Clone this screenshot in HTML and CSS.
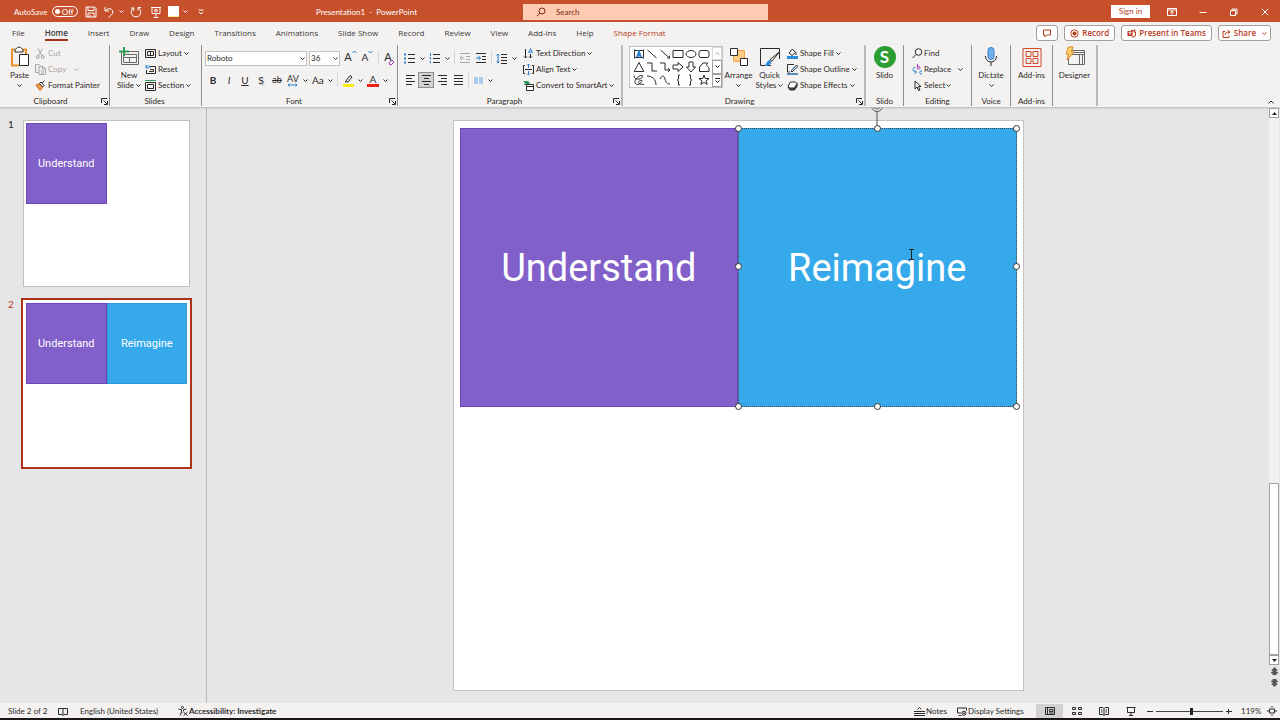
FILE: index.html
```html
<!DOCTYPE html>
<html lang="en">
<head>
<meta charset="utf-8">
<title>Presentation1 - PowerPoint</title>
<link rel="stylesheet" href="styles.css">
</head>
<body>
<svg class="sprite" aria-hidden="true">
  <symbol id="chev" viewBox="0 0 5 3"><path d="M.5.5l2 2 2-2"/></symbol>
  <symbol id="launch" viewBox="0 0 7 7"><path d="M.5 5V.5H6M2.500 2.500l3.500 3.500M6.500 3v3.500H3"/></symbol>
</svg>

<header class="titlebar">
  <div class="quick">
    <label class="autosave">AutoSave <span class="switch"><input type="checkbox" role="switch"><span>Off</span></span></label>
    <button class="qa" aria-label="Save"><svg width="12" height="12" viewBox="0 0 12 12"><path d="M1 1h8.500L11 2.500V11H1zM3 1v3.500h6V1M3 11V7h6v4M5 8.500v2.500"/></svg></button>
    <button class="qa undo" aria-label="Undo"><svg width="12" height="12" viewBox="0 0 12 12"><path d="M2 1v4h4M2.300 4.700C5 1.500 10 2.500 9.800 6c0 2.500-2.500 3.500-4.300 5.500"/></svg></button>
    <button class="drop" aria-label="Undo list"><svg class="chev"><use href="#chev"/></svg></button>
    <button class="qa redo" aria-label="Redo"><svg width="12" height="12" viewBox="0 0 12 12"><path d="M8 4.500v-3h3M8.500 2A4.800 4.800 0 1 1 3.500 2M.8 2h3v3"/></svg></button>
    <button class="qa" aria-label="Start from beginning"><svg width="12" height="12" viewBox="0 0 12 12"><path d="M1 1.500h10M2 1.500v6h8v-6M6 7.500v4M3.500 11.500h5M5 3l3 1.500L5 6z"/></svg></button>
    <button class="qa swatch" aria-label="Shape fill"><span></span></button>
    <button class="drop" aria-label="Fill options"><svg class="chev"><use href="#chev"/></svg></button>
    <button class="drop more" aria-label="Customize toolbar"><svg width="6" height="6" viewBox="0 0 6 6"><path d="M.5 1h5M1 3l2 2 2-2"/></svg></button>
  </div>
  <h1 class="doc">Presentation1&nbsp; -&nbsp; PowerPoint</h1>
  <label class="search"><svg width="10" height="10" viewBox="0 0 10 10"><circle cx="6" cy="4" r="3"/><path d="M4 6.200L.8 9.200"/></svg><input type="text" placeholder="Search" aria-label="Search"></label>
  <div class="window">
    <button class="signin">Sign in</button>
    <button class="win" aria-label="Ribbon display options"><svg width="10" height="8" viewBox="0 0 10 8"><path d="M.5.5h9v7h-9zM.5 2h9M5 6.500v-3M3.500 4.500L5 3l1.500 1.500"/></svg></button>
    <button class="win" aria-label="Minimize"><svg width="8" height="8" viewBox="0 0 8 8"><path d="M.5 4.500h7"/></svg></button>
    <button class="win" aria-label="Restore"><svg width="8" height="8" viewBox="0 0 8 8"><path d="M.5 2.500h5v5h-5zM2 2.500v-1.500h5v5H5.500"/></svg></button>
    <button class="win" aria-label="Close"><svg width="8" height="8" viewBox="0 0 8 8"><path d="M.8.8l6.400 6.400M7.200.8L.8 7.200"/></svg></button>
  </div>
</header>

<div class="tabrow">
  <nav class="tabs">
    <button>File</button><button class="active">Home</button><button>Insert</button><button>Draw</button><button>Design</button><button>Transitions</button><button>Animations</button><button>Slide Show</button><button>Record</button><button>Review</button><button>View</button><button>Add-ins</button><button>Help</button><button class="context">Shape Format</button>
  </nav>
  <div class="actions">
    <button aria-label="Comments"><svg width="10" height="9" viewBox="0 0 10 9"><path d="M1.500 1h7v5H4.500L2.800 7.800V6H1.500z"/></svg></button>
    <button><svg width="9" height="9" viewBox="0 0 9 9"><circle cx="4.500" cy="4.500" r="3.700"/><circle class="solid" cx="4.500" cy="4.500" r="2"/></svg>Record</button>
    <button><svg width="9" height="9" viewBox="0 0 9 9"><path class="solid" d="M.5 2h5v5h-5z"/><path d="M4 1.500h2v1M6.500 3h2v3c0 2-3 2.500-4 1.500"/><circle cx="7.500" cy="1.500" r=".8"/><path class="cut" d="M1.700 3.300h2.600M3 3.300v2.700"/></svg>Present in Teams</button>
    <button class="share"><svg width="9" height="9" viewBox="0 0 9 9"><path d="M3 2.500H1v6h6v-2M3 6c0-2 1.500-3 4-3M5.800 1L8 3 5.800 5"/></svg>Share<svg class="chev"><use href="#chev"/></svg></button>
  </div>
</div>

<div class="ribbon">
  <section class="group clipboard">
    <div class="tools">
      <button class="big"><svg width="20" height="22" viewBox="0 0 20 22"><path class="o" d="M5 3.500H2v16h7M13 3.500h3V8"/><path class="w" d="M5 3.500C6 3.500 7 1 9 1s3 2.500 4 2.500V6H5z"/><path class="w" d="M9.500 8.500h9v11h-9z"/></svg><span>Paste</span><svg class="chev"><use href="#chev"/></svg></button>
      <div class="stack">
        <button class="small off"><svg width="11" height="11" viewBox="0 0 11 11"><path d="M3 .5l4 7.500M7.500.5L3.500 8"/><circle cx="2.700" cy="9" r="1.500"/><circle cx="7.800" cy="9" r="1.500"/></svg>Cut</button>
        <button class="small off"><svg width="11" height="11" viewBox="0 0 11 11"><path d="M4 8.500H.5v-8H4L5 1.500M4 2.500h4l2.500 2.500v5.500H4zM7.500 2.500V5h3M6 7h3M6 9h3"/></svg>Copy<svg class="chev far"><use href="#chev"/></svg></button>
        <button class="small"><svg width="11" height="11" viewBox="0 0 11 11"><path class="of" d="M1 5l4-1.500 3 3.500-3 3.500z"/><path class="w" d="M4.500 3.500L6 2l3 3.500-1.500 1.500zM7 3.200L9.500.8"/></svg>Format Painter</button>
      </div>
    </div>
    <footer>Clipboard<button class="launcher" aria-label="Clipboard options"><svg><use href="#launch"/></svg></button></footer>
  </section>

  <section class="group slides">
    <div class="tools">
      <button class="big"><svg width="22" height="22" viewBox="0 0 22 22"><path class="grey" d="M3.500 5.500h17v13h-17zM5.500 8.500h13v8h-13zM5.500 11.500h13M11.500 11.500v5"/><path class="g" d="M6 1v9M1 5.500h10"/></svg><span>New<br>Slide <svg class="chev"><use href="#chev"/></svg></span></button>
      <div class="stack">
        <button class="small"><svg width="11" height="11" viewBox="0 0 11 11"><path d="M.5 1.500h10v8H.5zM2.500 3.500h6v4h-6zM5.500 3.500v4"/></svg>Layout <svg class="chev"><use href="#chev"/></svg></button>
        <button class="small"><svg width="11" height="11" viewBox="0 0 11 11"><path d="M5 2.500h5.500v7h-9V6M5 5.500h3.500v2H4"/><path class="b" d="M1 1v3h3M1.300 4C2 1 5 1 5 4"/></svg>Reset</button>
        <button class="small"><svg width="11" height="11" viewBox="0 0 11 11"><path class="g1" d="M0 .5h11"/><path d="M.5 2.500h10v8H.5zM2.500 4.500h6v4h-6z"/></svg>Section <svg class="chev"><use href="#chev"/></svg></button>
      </div>
    </div>
    <footer>Slides</footer>
  </section>

  <section class="group font">
    <div class="tools rows">
      <div class="row">
        <span class="combo face"><select aria-label="Font"><option>Roboto</option></select><svg class="chev"><use href="#chev"/></svg></span>
        <span class="combo size"><select aria-label="Font size"><option>36</option></select><svg class="chev"><use href="#chev"/></svg></span>
        <button class="cell grow" aria-label="Increase font size">A<svg width="5" height="4" viewBox="0 0 5 4"><path class="b" d="M.5 3l2-2 2 2"/></svg></button>
        <button class="cell grow less" aria-label="Decrease font size">A<svg width="5" height="4" viewBox="0 0 5 4"><path class="b" d="M.5 1l2 2 2-2"/></svg></button>
        <i class="rule"></i>
        <button class="cell grow" aria-label="Clear formatting">A<svg class="eraser" width="7" height="7" viewBox="0 0 7 7"><path class="p" d="M1 4l3-3 2 2-3 3H2z"/></svg></button>
      </div>
      <div class="row">
        <button class="cell bold">B</button><button class="cell ital">I</button><button class="cell under">U</button><button class="cell shade">S</button><button class="cell strike">ab</button>
        <button class="split"><span class="av">AV<svg width="11" height="4" viewBox="0 0 11 4"><path class="b" d="M1 2h9M2.500.5L1 2l1.500 1.500M8.500.5L10 2 8.500 3.500"/></svg></span><svg class="chev"><use href="#chev"/></svg></button>
        <button class="split"><span>Aa</span><svg class="chev"><use href="#chev"/></svg></button>
        <i class="rule"></i>
        <button class="split" aria-label="Highlight color"><svg width="12" height="13" viewBox="0 0 12 13"><path d="M4 7l4-5.500 2 1.500-4 5H3.500z"/><path class="yellow" d="M1 10h11v3H1z"/></svg><svg class="chev"><use href="#chev"/></svg></button>
        <button class="split"><span class="acolor">A</span><svg class="chev"><use href="#chev"/></svg></button>
      </div>
    </div>
    <footer>Font<button class="launcher" aria-label="Font options"><svg><use href="#launch"/></svg></button></footer>
  </section>

  <section class="group para">
    <div class="tools">
      <div class="rows">
        <div class="row">
          <button class="split wide" aria-label="Bullets"><svg width="11" height="11" viewBox="0 0 11 11"><path d="M4 1.500h7M4 5.500h7M4 9.500h7"/><path class="b2" d="M0 1.500h2M0 5.500h2M0 9.500h2"/></svg><svg class="chev"><use href="#chev"/></svg></button>
          <button class="split wide" aria-label="Numbering"><svg width="11" height="11" viewBox="0 0 11 11"><path d="M4 1.500h7M4 5.500h7M4 9.500h7"/><path class="b" d="M1.500 0v3M.5 4.500h1v2M.5 8.500h1v2"/></svg><svg class="chev"><use href="#chev"/></svg></button>
          <i class="rule"></i>
          <button class="cell off" aria-label="Decrease indent"><svg width="10" height="10" viewBox="0 0 10 10"><path d="M0 .5h10M6 3.500h4M6 6.500h4M0 9.500h10M0 5h4.500M2 3L0 5l2 2"/></svg></button>
          <button class="cell" aria-label="Increase indent"><svg width="10" height="10" viewBox="0 0 10 10"><path d="M0 .5h10M6 3.500h4M6 6.500h4M0 9.500h10"/><path class="b" d="M0 5h4.500M2.500 3l2 2-2 2"/></svg></button>
          <i class="rule"></i>
          <button class="split" aria-label="Line spacing"><svg width="11" height="11" viewBox="0 0 11 11"><path d="M5 1.500h6M5 4.500h6M5 7.500h6M5 10.500h6"/><path class="b" d="M2 1v9M.5 2.500L2 1l1.500 1.500M.5 8.500L2 10l1.500-1.500"/></svg><svg class="chev"><use href="#chev"/></svg></button>
        </div>
        <div class="row">
          <button class="cell" aria-label="Align left"><svg width="9" height="10" viewBox="0 0 9 10"><path d="M0 .5h9M0 3.500h6M0 6.500h9M0 9.500h6"/></svg></button>
          <button class="cell on" aria-label="Center"><svg width="9" height="10" viewBox="0 0 9 10"><path d="M0 .5h9M2 3.500h5M0 6.500h9M2 9.500h5"/></svg></button>
          <button class="cell" aria-label="Align right"><svg width="9" height="10" viewBox="0 0 9 10"><path d="M0 .5h9M3 3.500h6M0 6.500h9M3 9.500h6"/></svg></button>
          <button class="cell" aria-label="Justify"><svg width="9" height="10" viewBox="0 0 9 10"><path d="M0 .5h9M0 3.500h9M0 6.500h9M0 9.500h9"/></svg></button>
          <i class="rule"></i>
          <button class="split" aria-label="Columns"><svg width="9" height="7" viewBox="0 0 9 7"><path class="lb" d="M0 0h4v7H0zM5 0h4v7H5z"/></svg><svg class="chev"><use href="#chev"/></svg></button>
        </div>
      </div>
      <div class="stack">
        <button class="small"><svg width="11" height="11" viewBox="0 0 11 11"><path d="M2.500 1v9M1 8.500L2.500 10 4 8.500M7.500 6v4M6 8.500L7.500 10 9 8.500"/><path class="b" d="M5.500 5l2-4.500 2 4.500M6 4h3"/></svg>Text Direction <svg class="chev"><use href="#chev"/></svg></button>
        <button class="small"><svg width="11" height="11" viewBox="0 0 11 11"><path d="M2 1.500H.5v8H2M9 1.500h1.500v8H9M2 5.500h7"/><path class="b" d="M5.500 0v4M4 1.500L5.500 0 7 1.500M5.500 11V7M4 9.500L5.500 11 7 9.500"/></svg>Align Text <svg class="chev"><use href="#chev"/></svg></button>
        <button class="small"><svg width="11" height="11" viewBox="0 0 11 11"><path class="gf" d="M0 1h5l2 2-2 2H1l1-2z"/><path class="w" d="M3.500 4.500h7v6h-7zM3.500 6.500h7"/></svg>Convert to SmartArt <svg class="chev"><use href="#chev"/></svg></button>
      </div>
    </div>
    <footer>Paragraph<button class="launcher" aria-label="Paragraph options"><svg><use href="#launch"/></svg></button></footer>
  </section>

  <section class="group drawing">
    <div class="tools">
      <div class="gallery">
        <div class="shapes">
          <button aria-label="Text box"><svg viewBox="0 0 12 12"><path d="M1.500 2.500h9v7h-9z"/><path class="b2" d="M4 9l2-5 2 5M4.500 7.500h3"/><path class="b" d="M1 1.500h1M10 1.500h1M1 10.500h1M10 10.500h1"/></svg></button>
          <button aria-label="Line"><svg viewBox="0 0 12 12"><path d="M1.500 2l9 8"/></svg></button>
          <button aria-label="Arrow"><svg viewBox="0 0 12 12"><path d="M1.500 2l9 8M10.500 7.500V10H8"/></svg></button>
          <button aria-label="Rectangle"><svg viewBox="0 0 12 12"><path d="M1 2.500h10v7H1z"/></svg></button>
          <button aria-label="Oval"><svg viewBox="0 0 12 12"><ellipse cx="6" cy="6" rx="5" ry="3.500"/></svg></button>
          <button aria-label="Rounded rectangle"><svg viewBox="0 0 12 12"><rect x="1" y="2.500" width="10" height="7" rx="2"/></svg></button>
          <button aria-label="Triangle"><svg viewBox="0 0 12 12"><path d="M6 1.500L10.800 10.500H1.200z"/></svg></button>
          <button aria-label="Elbow connector"><svg viewBox="0 0 12 12"><path d="M1 2h5v8h5"/></svg></button>
          <button aria-label="Elbow arrow"><svg viewBox="0 0 12 12"><path d="M1 2h5v7h5M9 7l2 2-2 2"/></svg></button>
          <button aria-label="Right arrow"><svg viewBox="0 0 12 12"><path d="M1 4h5V1.500L11 6l-5 4.500V8H1z"/></svg></button>
          <button aria-label="Down arrow"><svg viewBox="0 0 12 12"><path d="M4 1v5H1.500L6 11l4.500-5H8V1z"/></svg></button>
          <button aria-label="Freeform shape"><svg viewBox="0 0 12 12"><path d="M1.500 10.500V6L5 2h4.500C7 5 10 5 11 7v3.500z"/></svg></button>
          <button aria-label="Scribble"><svg viewBox="0 0 12 12"><path d="M1 1.500c0 3 2 4 5 3.500s5-3 3-3.500-7 3-7 6 2 4 5 2 2-4 0-3-3 4 4 4"/></svg></button>
          <button aria-label="Arc"><svg viewBox="0 0 12 12"><path d="M1 2c5 0 9 3 9 9"/></svg></button>
          <button aria-label="Curve"><svg viewBox="0 0 12 12"><path d="M1 5c2-4 4-4 5 0s2 5 5 5"/></svg></button>
          <button aria-label="Left brace"><svg viewBox="0 0 12 12"><path d="M8 1H6.500V5L5 6l1.500 1v4H8"/></svg></button>
          <button aria-label="Right brace"><svg viewBox="0 0 12 12"><path d="M4 1h1.500V5L7 6 5.500 7v4H4"/></svg></button>
          <button aria-label="Star"><svg viewBox="0 0 12 12"><path d="M6 1l1.300 3.500H11L8.200 6.800l1 3.700L6 8.300l-3.200 2.200 1-3.700L1 4.500h3.700z"/></svg></button>
        </div>
        <div class="scroller">
          <button class="dim" aria-label="Scroll shapes up"><svg width="5" height="3" viewBox="0 0 5 3"><path d="M.5 2.500l2-2 2 2"/></svg></button>
          <button aria-label="Scroll shapes down"><svg class="chev"><use href="#chev"/></svg></button>
          <button aria-label="More shapes"><svg width="5" height="5" viewBox="0 0 5 5"><path d="M0 .5h5M.5 2.500l2 2 2-2"/></svg></button>
        </div>
      </div>
      <button class="big"><svg width="20" height="22" viewBox="0 0 20 22"><path class="amber" d="M4.500 4.500h11v11h-11z"/><path class="w" d="M1.500 2.500h7v7h-7zM11.500 12.500h7v7h-7z"/></svg><span>Arrange</span><svg class="chev"><use href="#chev"/></svg></button>
      <button class="big"><svg width="22" height="22" viewBox="0 0 22 22"><path d="M12 19.500H1.500v-17h19V13"/><path class="w" d="M20.500 6L13 15l-2-1.500z"/><path class="bf" d="M12.500 15.500C11 20 9 20 5.500 20c2-2 2-4.500 5-6z"/></svg><span>Quick<br>Styles <svg class="chev"><use href="#chev"/></svg></span></button>
      <div class="stack">
        <button class="small"><svg width="11" height="11" viewBox="0 0 11 11"><path d="M2 5l3.500-4 3 3.500L5 7.500zM9 4.500v2.500"/><path class="bf" d="M0 8h11v3H0z"/></svg>Shape Fill <svg class="chev"><use href="#chev"/></svg></button>
        <button class="small"><svg width="11" height="11" viewBox="0 0 11 11"><path d="M7 .5H.5V8H3M4 7l5.500-6L11 2.500 5 8z"/><path class="b" d="M4 7l4-4.500"/><path class="slate" d="M0 9h11v2H0z"/></svg>Shape Outline <svg class="chev"><use href="#chev"/></svg></button>
        <button class="small"><svg width="11" height="11" viewBox="0 0 11 11"><path class="dark" d="M1 7l2 3h4.500L10 6.500V3L7.500 8z"/><path class="w" d="M3.500 2h5L10 3.500 7.500 8h-5L1 6z"/></svg>Shape Effects <svg class="chev"><use href="#chev"/></svg></button>
      </div>
    </div>
    <footer>Drawing<button class="launcher" aria-label="Drawing options"><svg><use href="#launch"/></svg></button></footer>
  </section>

  <section class="group slido">
    <div class="tools"><button class="big"><span class="disc">S</span><span>Slido</span></button></div>
    <footer>Slido</footer>
  </section>

  <section class="group editing">
    <div class="tools">
      <div class="stack">
        <button class="small"><svg width="11" height="11" viewBox="0 0 11 11"><circle cx="6.500" cy="4" r="3.300"/><path d="M4 6.500L.5 10"/></svg>Find</button>
        <button class="small"><svg width="11" height="11" viewBox="0 0 11 11"><path class="p" d="M5.500 0v5M5.500 3c1-1.500 3-.5 2.500 1S6 5.500 5.500 4.500"/><path class="b" d="M10 7c-3-1-3 4 0 3M3.500 3.500C0 3 0 8 4 8M2.500 6L4.500 8l-2 2"/></svg>Replace<svg class="chev far"><use href="#chev"/></svg></button>
        <button class="small"><svg width="11" height="11" viewBox="0 0 11 11"><path d="M3 1v8l2-2 1.500 3.500L8 10 6.500 6.500H9z"/></svg>Select <svg class="chev"><use href="#chev"/></svg></button>
      </div>
    </div>
    <footer>Editing</footer>
  </section>

  <section class="group voice">
    <div class="tools"><button class="big"><svg width="14" height="22" viewBox="0 0 14 22"><rect class="mic" x="4" y="1.500" width="6" height="12" rx="3"/><path d="M1.500 10c0 8 11 8 11 0M7 16v4"/></svg><span>Dictate</span><svg class="chev"><use href="#chev"/></svg></button></div>
    <footer>Voice</footer>
  </section>

  <section class="group addins">
    <div class="tools"><button class="big"><svg width="20" height="22" viewBox="0 0 20 22"><path class="r" d="M1 2.500h18v18H1zM4 5.500h5v5H4zM11 5.500h5v5h-5zM4 12.500h5v5H4zM11 12.500h5v5h-5z"/></svg><span>Add-ins</span></button></div>
    <footer>Add-ins</footer>
  </section>

  <section class="group designer">
    <div class="tools"><button class="big"><svg width="22" height="22" viewBox="0 0 22 22"><path class="grey" d="M4.500 4.500h16v14h-16zM6.500 8.500h14M15.500 8.500v10M6 6.500h14M18.500 8.500v10"/><path class="bolt" d="M4.500 1H9L7 6h3L3 14l1.500-6H2z"/></svg><span>Designer</span></button></div>
  </section>

  <button class="collapse" aria-label="Collapse ribbon"><svg width="6" height="4" viewBox="0 0 6 4"><path d="M.5 3.500L3 1l2.500 2.500"/></svg></button>
</div>

<main class="work">
  <aside class="panel">
    <div class="thumbrow"><span>1</span><div class="thumb"><div class="shape purple">Understand</div></div></div>
    <div class="thumbrow current"><span>2</span><div class="thumb"><div class="shape purple">Understand</div><div class="shape blue">Reimagine</div></div></div>
  </aside>
  <div class="stage">
    <div class="slide">
      <div class="shape purple">Understand</div>
      <div class="shape blue">Reimagine
        <svg class="rotate" width="14" height="26" viewBox="0 0 14 26"><path d="M7 8v16M1.500 3a5.500 5.500 0 0 0 11 0M4 3a3 3 0 0 0 6 0"/></svg>
        <i class="knob nw"></i><i class="knob n"></i><i class="knob ne"></i><i class="knob w"></i><i class="knob e"></i><i class="knob sw"></i><i class="knob s"></i><i class="knob se"></i>
        <svg class="ibeam" width="7" height="13" viewBox="0 0 7 13"><path d="M1 1.500h5M3.500 1.500v9.500M1 11.500h5"/></svg>
      </div>
    </div>
  </div>
  <div class="scrollbar">
    <button class="arrow" aria-label="Scroll up"><svg width="5" height="3" viewBox="0 0 5 3"><path d="M0 3l2.500-3L5 3z"/></svg></button>
    <div class="track"><div class="grip"></div></div>
    <button class="arrow" aria-label="Scroll down"><svg width="5" height="3" viewBox="0 0 5 3"><path d="M0 0l2.500 3L5 0z"/></svg></button>
    <button class="page" aria-label="Previous slide"><svg width="7" height="8" viewBox="0 0 7 8"><path d="M3.500 0L7 3.500H5.500V5H7v1.200H5.500V8h-4V6.200H0V5h1.500V3.500H0z"/></svg></button>
    <button class="page" aria-label="Next slide"><svg width="7" height="8" viewBox="0 0 7 8"><path d="M3.500 8L7 4.500H5.500V3H7V1.800H5.500V0h-4v1.800H0V3h1.500v1.500H0z"/></svg></button>
  </div>
</main>

<footer class="status">
  <span class="count">Slide 2 of 2</span>
  <button class="book" aria-label="Spelling"><svg width="10" height="9" viewBox="0 0 10 9"><path d="M5 1.500H.5v6H4l1 1 1-1h3.500v-6H5v7"/></svg></button>
  <button class="lang">English (United States)</button>
  <button class="access"><svg width="10" height="10" viewBox="0 0 10 10"><circle cx="4.500" cy="1.500" r="1"/><path d="M.5 3l3 .8v2.200L2 9.500M8.500 3l-3 .8v1.500M3.500 6.500l1 .5M5.500 6l4 3.500M9.500 6L5.500 9.500"/></svg>Accessibility: Investigate</button>
  <div class="tail">
    <button class="note"><svg width="11" height="9" viewBox="0 0 11 9"><path d="M3.500 2.500l2-2 2 2M0 4.500h11M0 6.500h11M0 8.500h11"/></svg>Notes</button>
    <button class="display"><svg width="10" height="9" viewBox="0 0 10 9"><path d="M4 6H.5V1h9v2.500M1.500 8.500h3"/><circle cx="7" cy="6.200" r="2"/><circle cx="7" cy="6.200" r=".5"/></svg>Display Settings</button>
    <button class="view on" aria-label="Normal view"><svg width="10" height="8" viewBox="0 0 10 8"><path d="M.5.5h9v7h-9zM2.500.5v7M4.500 2.500h3.500v2H4.500zM4 6h4.500"/></svg></button>
    <button class="view" aria-label="Slide sorter"><svg width="10" height="8" viewBox="0 0 10 8"><path d="M.5.500h3v2h-3zM6.500.5h3v2h-3zM.5 5.500h3v2h-3zM6.500 5.500h3v2h-3z"/></svg></button>
    <button class="view" aria-label="Reading view"><svg width="10" height="9" viewBox="0 0 10 9"><path d="M.5.5h3.500l1 1 1-1h3.500v7H6l-1 1-1-1H.5zM5 1.500v7M2 3h1.500M2 5h1.500M6.500 3H8M6.500 5H8"/></svg></button>
    <button class="view" aria-label="Slide show"><svg width="10" height="9" viewBox="0 0 10 9"><path d="M.5.5h9M1.500.5v5h7v-5M5 5.500v3M3 8.500h4"/></svg></button>
    <button class="zoom" aria-label="Zoom out"><svg width="6" height="6" viewBox="0 0 6 6"><path d="M0 3.500h6"/></svg></button>
    <input type="range" min="0" max="100" value="53" aria-label="Zoom">
    <button class="zoom" aria-label="Zoom in"><svg width="6" height="6" viewBox="0 0 6 6"><path d="M0 3.500h6M2.500 1v5"/></svg></button>
    <button class="percent">119%</button>
    <button class="fit" aria-label="Fit slide"><svg width="10" height="10" viewBox="0 0 10 10"><path d="M2.500 3h5v4h-5zM4 1.500l1-1 1 1M4 8.500l1 1 1-1M1.500 4l-1 1 1 1M8.500 4l1 1-1 1"/></svg></button>
  </div>
</footer>
</body>
</html>
```

FILE: styles.css
```css
* { box-sizing: border-box; }

body {
  margin: 0;
  height: 100vh;
  display: flex;
  flex-direction: column;
  overflow: hidden;
  background: #e6e6e8;
  color: #2b2a29;
  font: 8px/10px Lato, "Noto Sans", sans-serif;
}

button, input, select {
  margin: 0;
  padding: 0;
  border: 0;
  background: none;
  color: inherit;
  font: inherit;
  white-space: nowrap;
}

svg { flex: none; fill: none; stroke: currentColor; stroke-width: 1; overflow: visible; }
.sprite { position: absolute; width: 0; height: 0; }
.chev { width: 5px; height: 3px; }

/* Icon paints */
.o { stroke: #e8912d; stroke-width: 2; }
.of { fill: #f0a04b; stroke: #c8641e; }
.w { fill: #fff; }
.g { stroke: #2d9a5b; stroke-width: 2; }
.g1 { stroke: #2d9a5b; }
.gf { fill: #2d9a5b; stroke: none; }
.grey { stroke: #6b6967; }
.b { stroke: #2b7fd0; }
.b2 { stroke: #2b7fd0; stroke-width: 2; }
.bf { fill: #2b8bdc; stroke: none; }
.lb { fill: #a9cdee; stroke: none; }
.p { stroke: #9b3fb5; }
.r { stroke: #cf4a26; }
.yellow { fill: #fdea14; stroke: none; }
.amber { fill: #ffce85; stroke: #f0a04b; }
.slate { fill: #5b87b5; stroke: none; }
.dark { fill: #555; }
.mic { fill: #6fb1f0; stroke: #3a7dc4; }
.bolt { fill: #ffd56b; stroke: #e0812a; }

/* Title bar */
.titlebar {
  flex: none;
  display: grid;
  grid-template-columns: 316px 207px 245px 1fr;
  align-items: center;
  height: 22px;
  padding-top: 1px;
  background: #c5502b;
  color: #fff;
}
.quick { display: flex; align-items: center; padding-left: 14px; }
.autosave { display: flex; align-items: center; gap: 5px; width: 68px; }
.switch {
  position: relative;
  display: flex;
  align-items: center;
  justify-content: flex-end;
  width: 26px;
  height: 11px;
  padding-right: 4px;
  border: 1px solid #fff;
  border-radius: 6px;
}
.switch input {
  appearance: none;
  position: absolute;
  left: 2px;
  width: 5px;
  height: 5px;
  border-radius: 50%;
  background: #fff;
}
.qa { display: flex; justify-content: center; width: 18px; }
.drop { display: flex; justify-content: center; width: 7px; }
.redo { width: 22px; }
.swatch { width: 17px; }
.swatch span { width: 11px; height: 11px; background: #fff; border-bottom: 1px solid #f6e6a0; }
.more { width: 24px; }
.doc { margin: 0; font: inherit; white-space: nowrap; }
.search {
  display: flex;
  align-items: center;
  gap: 10px;
  height: 16px;
  padding: 0 13px;
  background: #ffcbb3;
  color: #7c2a12;
}
.search input { flex: 1; min-width: 0; outline: 0; }
.search input::placeholder { color: inherit; opacity: 1; }
.window { display: flex; align-items: center; justify-content: flex-end; }
.signin { width: 39px; height: 13px; margin-right: 6px; background: #fff; color: #b83b1d; line-height: 13px; }
.win { display: flex; justify-content: center; width: 31px; }

/* Tabs */
.tabrow {
  flex: none;
  display: flex;
  justify-content: space-between;
  align-items: center;
  height: 22px;
  padding: 0 9px 0 12px;
  background: #f4f2f1;
  color: #3b3a39;
  font-family: "Open Sans", "Noto Sans", sans-serif;
}
.tabs { display: flex; gap: 20px; }
.tabs button { position: relative; height: 22px; line-height: 22px; }
.tabs .active { font-weight: 600; }
.tabs .active::after {
  content: "";
  position: absolute;
  right: 0;
  bottom: 3px;
  left: 0;
  height: 2px;
  background: #a5301c;
}
.tabs .context { color: #b83b1d; }
.actions { display: flex; gap: 6px; color: #b83b1d; font-weight: 600; }
.actions button {
  display: flex;
  align-items: center;
  gap: 3px;
  height: 16px;
  padding: 0 5px;
  border: 1px solid #a19f9d;
  border-radius: 3px;
  background: #fff;
}
.actions .share { padding: 0 3px; }
.actions .chev { margin-left: 3px; }
.solid { fill: currentColor; stroke: none; }
.cut { stroke: #fff; }

/* Ribbon */
.ribbon {
  position: relative;
  z-index: 1;
  flex: none;
  display: flex;
  height: 63px;
  padding-top: 1px;
  background: #f4f2f1;
  box-shadow: 0 1px 2px #b8b6b4;
}
.group {
  position: relative;
  flex: none;
  display: flex;
  flex-direction: column;
  height: 61px;
  border-right: 1px solid #8f8d8b;
}
.group footer { display: flex; justify-content: center; height: 10px; line-height: 10px; }
.clipboard footer { padding-right: 12px; }
.slides footer { padding-right: 5px; }
.font footer, .para footer, .drawing footer { padding-right: 14px; }
.launcher { position: absolute; right: 1px; bottom: 1px; width: 7px; height: 7px; }
.launcher svg { display: block; width: 7px; height: 7px; }
.tools { flex: 1; display: flex; align-items: flex-start; }
.clipboard { width: 110px; padding-left: 4px; }
.slides { width: 92px; padding-left: 3px; }
.font { width: 196px; padding-left: 3px; }
.para { width: 225px; padding-left: 4px; border-right-width: 2px; border-color: #bcbab8; }
.drawing { width: 243px; padding-left: 6px; border-right-width: 2px; border-color: #bcbab8; }
.slido { width: 38px; }
.editing { width: 68px; padding-left: 8px; }
.editing footer { padding-right: 8px; }
.voice { width: 39px; }
.addins { width: 42px; }
.designer { width: 45px; border-right-width: 2px; border-color: #bcbab8; }

.big { display: flex; flex-direction: column; align-items: center; gap: 2px; width: 31px; padding-top: 1px; }
.slides .big { width: 32px; }
.slido .big, .voice .big, .addins .big, .designer .big { width: 100%; }
.big .chev { margin-top: 2px; }
.big span .chev { margin-top: 0; vertical-align: middle; }
.disc {
  width: 22px;
  height: 22px;
  border-radius: 50%;
  background: #2a9d33;
  color: #fff;
  font-size: 17px;
  font-weight: 700;
  line-height: 22px;
}

.stack { display: flex; flex-direction: column; }
.drawing .stack { padding-left: 2px; }
.small { display: flex; align-items: center; gap: 2px; height: 16px; }
.off { color: #a8a6a4; }
.far { margin-left: 6px; }
.editing .small { gap: 1px; }

.rows { display: flex; flex-direction: column; align-items: flex-start; padding-top: 5px; gap: 6px; }
.row { display: flex; align-items: center; height: 16px; }
.combo { position: relative; display: flex; align-items: center; height: 15px; margin-right: 2px; border: 1px solid #c3c1bf; background: #fff; }
.combo select { appearance: none; width: 100%; height: 13px; padding-left: 1px; outline: 0; }
.combo .chev { position: absolute; right: 1px; }
.face { width: 102px; }
.size { width: 31px; }
.cell { display: flex; align-items: center; justify-content: center; width: 16px; height: 16px; font-size: 10px; }
.grow { width: 17px; font-size: 11px; align-items: flex-start; line-height: 14px; }
.less { font-size: 10px; }
.grow .eraser { align-self: flex-end; margin-left: -4px; }
.bold { font-weight: 700; }
.ital { font-style: italic; }
.under { text-decoration: underline; }
.shade { text-shadow: 1px 1px 1px #aaa; }
.strike { text-decoration: line-through; font-size: 9px; }
.on { border: 1px solid #8f8d8b; background: #d4d2d0; }
.split { display: flex; align-items: center; justify-content: space-around; width: 25px; height: 16px; font-size: 10px; }
.av { display: flex; flex-direction: column; font-size: 9px; line-height: 9px; }
.acolor { width: 12px; border-bottom: 3px solid #ea2015; line-height: 10px; }
.rule { width: 1px; height: 14px; margin: 0 2px; background: #d8d6d4; }
.para .rows { width: 121px; }

.gallery { display: flex; height: 42px; margin-top: 1px; border: 1px solid #c3c1bf; background: #fff; }
.shapes { display: grid; grid-template-columns: repeat(6, 13px); padding: 0 2px; }
.shapes button { display: flex; align-items: center; justify-content: center; }
.shapes svg { width: 12px; height: 12px; }
.scroller { display: flex; flex-direction: column; width: 10px; }
.scroller button { flex: 1; display: flex; align-items: center; justify-content: center; border: 1px solid #a19f9d; }
.scroller .dim { border-color: #dddbd9; color: #a8a6a4; }

.collapse { display: flex; align-items: flex-end; margin-left: auto; padding: 0 6px 3px; }

/* Work area */
.work { flex: 1; display: flex; min-height: 0; }
.panel {
  flex: none;
  display: flex;
  flex-direction: column;
  gap: 13px;
  width: 207px;
  padding: 13px 16px 0 8px;
  border-right: 1px solid #b9b9bb;
}
.thumbrow { display: flex; align-items: flex-start; gap: 8px; font-size: 10px; }
.thumbrow > span { width: 7px; line-height: 8px; }
.thumb {
  flex: 1;
  display: grid;
  grid-template-columns: 1fr 1fr;
  align-items: start;
  aspect-ratio: 1;
  padding: 2px;
  border: 1px solid #bfbfc1;
  background: #fff;
  font-size: 11px;
}
.current { color: #b83b1d; }
.current .thumb { border-color: #fff; outline: 2px solid #ab3416; }
.shape {
  position: relative;
  display: flex;
  align-items: center;
  justify-content: center;
  aspect-ratio: 1;
  padding-top: 2px;
  color: #fff;
  font-family: Roboto, sans-serif;
}
.purple { background: #8260ca; border: 1px solid #6d45bd; }
.blue { background: #36a9eb; border: 1px solid #2d97d6; }

.stage { flex: 1; display: flex; justify-content: center; min-width: 0; padding: 13px 0 12px; }
.slide {
  display: grid;
  grid-template-columns: 1fr 1fr;
  align-items: start;
  height: 100%;
  aspect-ratio: 1;
  padding: 7px 6px;
  border: 1px solid #c4c4c6;
  background: #fff;
  font-size: 38px;
  line-height: 44px;
}
.slide .blue { border: 1px dotted #444; }
.knob { position: absolute; width: 7px; height: 7px; margin: -4px; border: 1px solid #333; border-radius: 50%; background: #fff; }
.nw { left: 0; top: 0; }
.n { left: 50%; top: 0; }
.ne { left: 100%; top: 0; }
.w.knob { left: 0; top: 50%; }
.e { left: 100%; top: 50%; }
.sw { left: 0; top: 100%; }
.s { left: 50%; top: 100%; }
.se { left: 100%; top: 100%; }
.n, .ne, .e, .s, .se { margin-left: -3px; }
.sw, .s, .se { margin-top: -3px; }
.rotate { position: absolute; left: 50%; bottom: 100%; margin-left: -7px; color: #555; }
.ibeam { position: absolute; left: 61%; top: 43%; color: #222; }

.scrollbar { flex: none; display: flex; flex-direction: column; width: 11px; padding: 1px 1px 14px 0; }
.arrow { display: flex; align-items: center; justify-content: center; height: 10px; border: 1px solid #a0a0a0; background: #fff; }
.arrow path, .page path { fill: #222; stroke: none; }
.track { flex: 1; display: flex; flex-direction: column; justify-content: flex-end; background: #f1f1f2; }
.grip { height: 32%; border: 1px solid #a0a0a0; background: #fff; }
.page { display: flex; align-items: center; justify-content: center; height: 12px; }
.page path { fill: #555; }

/* Status bar */
.status {
  flex: none;
  display: flex;
  align-items: center;
  height: 17px;
  padding: 1px 3px 0 8px;
  border-bottom: 2px solid #1b1718;
  background: #f4f2f1;
}
.status button { display: flex; align-items: center; gap: 1px; }
.count { width: 50px; }
.book { width: 22px; }
.lang { width: 98px; }
.access { font-weight: 700; }
.tail { display: flex; align-items: center; height: 14px; margin-left: auto; }
.note { width: 43px; }
.display { width: 79px; }
.status .view { justify-content: center; width: 27px; height: 14px; }
.status .view.on { border: 0; background: #d4d2d0; }
.status .zoom { justify-content: center; width: 12px; }
.tail input { appearance: none; width: 67px; height: 12px; background: linear-gradient(#444, #444) center / 100% 1px no-repeat; }
.tail input::-webkit-slider-thumb { appearance: none; width: 3px; height: 7px; background: #222; }
.status .percent { width: 32px; padding-left: 6px; }
```
